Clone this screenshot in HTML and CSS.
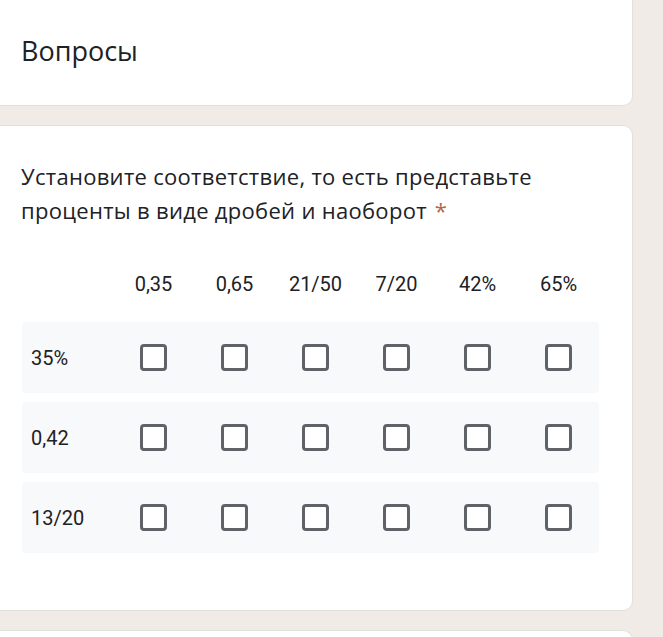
FILE: index.html
```html
<!DOCTYPE html>
<html lang="ru">
<head>
<meta charset="utf-8">
<link rel="stylesheet" href="styles.css">
</head>
<body>
<div class="page">
  <section class="card card-head">
    <h1 class="title">Вопросы</h1>
  </section>
  <section class="card card-q">
    <div class="question">Установите соответствие, то есть представьте проценты в виде дробей и&nbsp;наоборот<span class="req">*</span></div>
    <div class="grid">
      <div class="hrow">
        <div class="lab"></div>
        <div class="col">0,35</div>
        <div class="col">0,65</div>
        <div class="col">21/50</div>
        <div class="col">7/20</div>
        <div class="col">42%</div>
        <div class="col">65%</div>
      </div>
      <div class="row">
        <div class="lab">35%</div>
        <div class="col"><span class="box"></span></div>
        <div class="col"><span class="box"></span></div>
        <div class="col"><span class="box"></span></div>
        <div class="col"><span class="box"></span></div>
        <div class="col"><span class="box"></span></div>
        <div class="col"><span class="box"></span></div>
      </div>
      <div class="row">
        <div class="lab">0,42</div>
        <div class="col"><span class="box"></span></div>
        <div class="col"><span class="box"></span></div>
        <div class="col"><span class="box"></span></div>
        <div class="col"><span class="box"></span></div>
        <div class="col"><span class="box"></span></div>
        <div class="col"><span class="box"></span></div>
      </div>
      <div class="row">
        <div class="lab">13/20</div>
        <div class="col"><span class="box"></span></div>
        <div class="col"><span class="box"></span></div>
        <div class="col"><span class="box"></span></div>
        <div class="col"><span class="box"></span></div>
        <div class="col"><span class="box"></span></div>
        <div class="col"><span class="box"></span></div>
      </div>
    </div>
  </section>
  <section class="card card-next"></section>
</div>
</body>
</html>
```
FILE: styles.css
```css
html, body {
  margin: 0;
  padding: 0;
  background: #f0ebe6;
  overflow: hidden;
}
body {
  width: 663px;
  height: 637px;
}
.page {
  display: flex;
  flex-direction: column;
  gap: 19px;
  margin-left: -20px;
  width: 653px;
  margin-top: -10px;
}
.card {
  background: #fff;
  border: 1px solid #e3dfdb;
  border-radius: 10px;
  box-sizing: border-box;
}
.card-head {
  height: 116px;
  padding: 43px 0 0 40px;
}
.title {
  margin: 0;
  font-family: "Open Sans", sans-serif;
  font-weight: 500;
  font-size: 27px;
  line-height: 34px;
  color: #202124;
}
.card-q {
  height: 486px;
  padding: 33px 0 0 40px;
}
.question {
  font-family: "Open Sans", sans-serif;
  font-size: 22px;
  letter-spacing: 0.3px;
  line-height: 34px;
  color: #202124;
  width: 560px;
}
.req {
  display: inline-block;
  margin-left: 8px;
  color: #b0694a;
}
.grid {
  margin-top: 40px;
  margin-left: 1px;
  width: 577px;
  display: flex;
  flex-direction: column;
  gap: 9px;
  font-family: Roboto, sans-serif;
  font-size: 20px;
  color: #202124;
}
.hrow, .row {
  display: grid;
  grid-template-columns: 91px repeat(6, 81px);
  align-items: center;
}
.hrow {
  height: 34px;
  margin-bottom: 12px;
}
.row {
  height: 71px;
  background: #f8f9fa;
  border-radius: 4px;
}
.lab {
  padding-left: 9px;
}
.col {
  display: flex;
  justify-content: center;
  align-items: center;
}
.box {
  width: 27px;
  height: 27px;
  box-sizing: border-box;
  border: 3px solid #5f6368;
  border-radius: 4px;
  background: #fff;
}
.card-next {
  height: 40px;
}
```
